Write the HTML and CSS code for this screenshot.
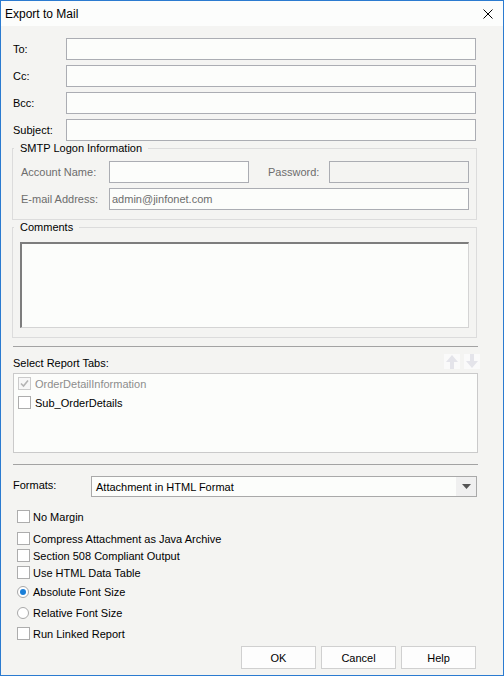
FILE: index.html
```html
<!DOCTYPE html>
<html>
<head>
<meta charset="utf-8">
<title>Export to Mail</title>
<link rel="stylesheet" href="styles.css">
</head>
<body>
<div class="window">
  <div class="titlebar">
    <span class="title">Export to Mail</span>
    <svg class="close" width="10" height="10" viewBox="0 0 10 10"><path d="M0.5 0.5 L9.5 9.5 M9.5 0.5 L0.5 9.5" stroke="#000" stroke-width="1" fill="none"/></svg>
  </div>
  <div class="content">
    <div class="field"><span class="flabel">To:</span><div class="input"></div></div>
    <div class="field"><span class="flabel">Cc:</span><div class="input"></div></div>
    <div class="field"><span class="flabel">Bcc:</span><div class="input"></div></div>
    <div class="field"><span class="flabel">Subject:</span><div class="input"></div></div>

    <div class="group smtp">
      <div class="group-title">SMTP Logon Information</div>
      <div class="smtp-grid">
        <span class="dlabel">Account Name:</span>
        <div class="input"></div>
        <span></span>
        <span class="dlabel">Password:</span>
        <div class="input disabled"></div>
        <span class="dlabel">E-mail Address:</span>
        <div class="input email"><span class="dtext">admin@jinfonet.com</span></div>
      </div>
    </div>

    <div class="group comments">
      <div class="group-title">Comments</div>
      <div class="textarea"></div>
    </div>

    <div class="sep sep-a"></div>

    <div class="tabs-head">
      <span class="tabs-label">Select Report Tabs:</span>
      <div class="arrows">
        <div class="arrow-btn"><svg width="16" height="15" viewBox="0 0 16 15"><path d="M8 1 L14 8 L10 8 L10 15 L6 15 L6 8 L2 8 Z" fill="#e4e4ea"/></svg></div>
        <div class="arrow-btn"><svg width="16" height="15" viewBox="0 0 16 15"><path d="M8 14 L14 7 L10 7 L10 0 L6 0 L6 7 L2 7 Z" fill="#e4e4ea"/></svg></div>
      </div>
    </div>

    <div class="listbox">
      <div class="item disabled-item">
        <span class="check check-disabled"><svg width="11" height="11" viewBox="0 0 11 11"><path d="M2 5.5 L4.5 8 L9 2.5" stroke="#b4b4b4" stroke-width="1.6" fill="none"/></svg></span>
        <span>OrderDetailInformation</span>
      </div>
      <div class="item">
        <span class="check"></span>
        <span>Sub_OrderDetails</span>
      </div>
    </div>

    <div class="sep sep-b"></div>

    <div class="formats">
      <span class="formats-label">Formats:</span>
      <div class="combo">
        <span class="combo-text">Attachment in HTML Format</span>
        <span class="combo-btn"><svg width="9" height="5" viewBox="0 0 9 5"><path d="M0 0 L9 0 L4.5 5 Z" fill="#555"/></svg></span>
      </div>
    </div>

    <div class="opt opt-first"><span class="check"></span><span>No Margin</span></div>
    <div class="opt opt-m5"><span class="check"></span><span>Compress Attachment as Java Archive</span></div>
    <div class="opt"><span class="check"></span><span>Section 508 Compliant Output</span></div>
    <div class="opt"><span class="check"></span><span>Use HTML Data Table</span></div>
    <div class="opt opt-m2"><span class="radio radio-on"><span class="dot"></span></span><span>Absolute Font Size</span></div>
    <div class="opt opt-m4"><span class="radio"></span><span>Relative Font Size</span></div>
    <div class="opt opt-m4"><span class="check"></span><span>Run Linked Report</span></div>

    <div class="buttons">
      <div class="btn">OK</div>
      <div class="btn">Cancel</div>
      <div class="btn">Help</div>
    </div>
  </div>
</div>
</body>
</html>
```

FILE: styles.css
```css
* { box-sizing: border-box; }

body {
  margin: 0;
  font-family: "Liberation Sans", Arial, sans-serif;
  font-size: 11px;
  color: #000;
  background: #fff;
}

.window {
  width: 504px;
  height: 676px;
  border: 1px solid #2b7bd0;
  background: #f4f4f2;
  display: flex;
  flex-direction: column;
  overflow: hidden;
}

.titlebar {
  height: 25px;
  flex: none;
  background: #fcfdfc;
  display: flex;
  align-items: center;
  justify-content: space-between;
  padding: 0 10px 0 4px;
}

.title {
  font-size: 12px;
}

.close {
  display: block;
}

.content {
  display: flex;
  flex-direction: column;
  padding: 12px 25px 0 12px;
}

.field {
  display: flex;
  align-items: center;
  height: 22px;
  margin-right: 2px;
}

.field + .field {
  margin-top: 5px;
}

.flabel {
  width: 53px;
  flex: none;
}

.input {
  height: 22px;
  border: 1px solid #abadb3;
  background: #fcfdfb;
  display: flex;
  align-items: center;
}

.field .input {
  flex: 1;
}

.input.disabled {
  background: #f4f4f2;
}

.group {
  border: 1px solid #dcdcdc;
  margin: 7px 1px 0 -1px;
  display: flex;
  flex-direction: column;
}

.group-title {
  align-self: flex-start;
  height: 15px;
  line-height: 15px;
  margin: -8px 0 0 1px;
  padding: 0 6px;
  background: #f4f4f2;
}

.smtp-grid {
  display: grid;
  grid-template-columns: 88px 140px 19px 61px 140px;
  grid-auto-rows: 22px;
  row-gap: 5px;
  align-items: center;
  padding: 5px 0 9px 8px;
}

.dlabel {
  color: #6d6d6d;
}

.input.email {
  grid-column: 2 / 6;
}

.dtext {
  color: #6d6d6d;
  padding-left: 2px;
}

.textarea {
  height: 86px;
  margin: 7px 7px 9px 7px;
  background: #fcfdfb;
  border-top: 2px solid #7d7d7d;
  border-left: 2px solid #7d7d7d;
  border-right: 1px solid #d4d4d4;
  border-bottom: 1px solid #d4d4d4;
}

.sep {
  height: 1px;
  background: #a3a3a3;
  flex: none;
}

.sep-a {
  margin-top: 8px;
}

.sep-b {
  margin-top: 11px;
}

.tabs-head {
  display: flex;
  justify-content: space-between;
  align-items: center;
  height: 15px;
  margin-top: 7px;
}

.tabs-label {
  margin-top: 3px;
}

.arrows {
  display: flex;
  gap: 4px;
  margin-right: -2px;
}

.arrow-btn {
  width: 16px;
  height: 15px;
  background: #fafafa;
}

.arrow-btn svg {
  display: block;
}

.listbox {
  height: 80px;
  margin-top: 4px;
  border: 1px solid #cacaca;
  background: #fcfdfb;
  padding-left: 4px;
}

.item {
  display: flex;
  align-items: center;
  height: 19px;
}

.item .check {
  margin-right: 4px;
}

.disabled-item {
  color: #8d8d8d;
}

.check {
  width: 13px;
  height: 13px;
  flex: none;
  border: 1px solid #adadad;
  background: #fff;
  margin-right: 3px;
  display: flex;
  align-items: center;
  justify-content: center;
}

.check-disabled {
  border-color: #cbcbcb;
  background: #f7f7f7;
}

.check svg {
  display: block;
}

.formats {
  display: flex;
  margin-top: 11px;
  height: 21px;
}

.formats-label {
  width: 78px;
  flex: none;
  line-height: 18px;
}

.combo {
  width: 386px;
  height: 21px;
  border: 1px solid #a9a9a9;
  background: #fcfdfb;
  display: flex;
  align-items: center;
  justify-content: space-between;
}

.combo-text {
  padding-left: 4px;
}

.combo-btn {
  width: 20px;
  height: 19px;
  background: #f0f0f0;
  display: flex;
  align-items: center;
  justify-content: center;
}

.combo-btn svg {
  display: block;
}

.opt {
  display: flex;
  align-items: center;
  height: 17px;
  padding-left: 4px;
}

.opt-first {
  margin-top: 11px;
}

.opt-m5 {
  margin-top: 5px;
}

.opt-m2 {
  margin-top: 2px;
}

.opt-m4 {
  margin-top: 4px;
}

.radio {
  width: 12px;
  height: 12px;
  flex: none;
  border: 1px solid #a8a8a8;
  border-radius: 50%;
  background: #fff;
  margin-right: 4px;
  display: flex;
  align-items: center;
  justify-content: center;
}

.radio .dot {
  width: 6px;
  height: 6px;
  border-radius: 50%;
  background: #1a7fd8;
}

.buttons {
  display: flex;
  justify-content: flex-end;
  gap: 5px;
  margin: 4px 2px 0 0;
}

.btn {
  width: 75px;
  height: 23px;
  border: 1px solid #d0d0d0;
  background: #fdfdfd;
  display: flex;
  align-items: center;
  justify-content: center;
}
```
